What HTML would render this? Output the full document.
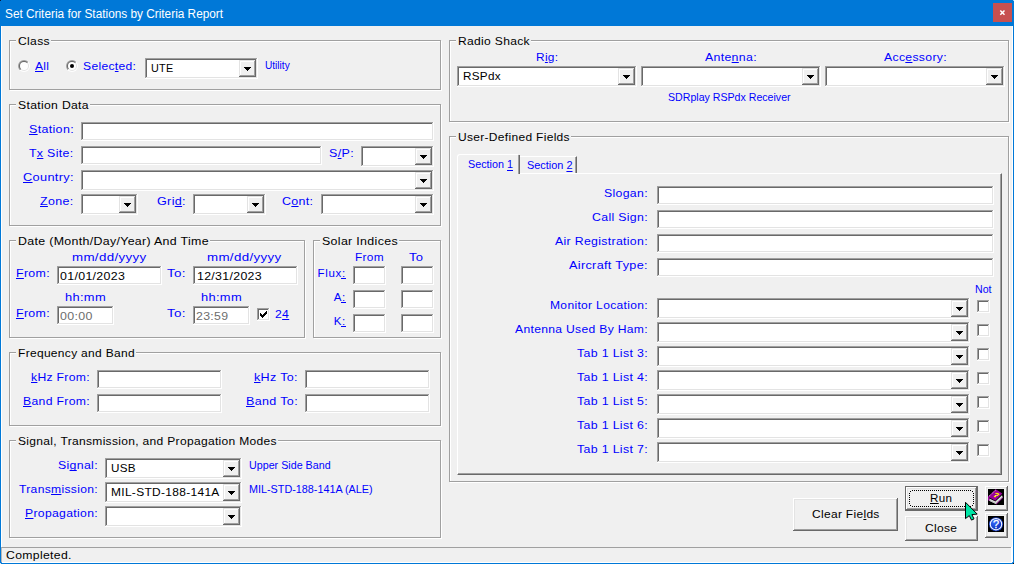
<!DOCTYPE html><html><head><meta charset="utf-8"><title>Set Criteria for Stations by Criteria Report</title><style>
html,body{margin:0;padding:0;}
body{width:1014px;height:564px;overflow:hidden;background:#f0f0f0;position:relative;font-family:"Liberation Sans",sans-serif;}
div,span,svg{position:absolute;box-sizing:border-box;}
.s{white-space:nowrap;line-height:1;}
.s u{position:static;text-decoration:underline;text-underline-offset:0.5px;text-decoration-thickness:1px;text-decoration-skip-ink:none;}
.fv{font-size:11.5px;}
.fa{font-size:11px;}
.ft{font-size:12px;}
.fx{font-size:10px;}
.fa u{text-underline-offset:1.5px;}
.fx{font-weight:bold;}
.gb{border:1px solid #a0a0a0;box-shadow:1px 1px 0 #fff, inset 1px 1px 0 #fff;}
.gap{background:#f0f0f0;height:2px;}
.tb,.ck{background:linear-gradient(#fff,#fff) right top/1px 100% no-repeat,linear-gradient(#fff,#fff) left bottom/100% 1px no-repeat,linear-gradient(#a0a0a0,#a0a0a0) left top/100% 1px no-repeat,linear-gradient(#a0a0a0,#a0a0a0) left top/1px 100% no-repeat,#fff;}
.tb::before,.ck::before,.btn::before,.cbb::before{content:"";position:absolute;left:1px;top:1px;right:1px;bottom:1px;}
.tb::before,.ck::before{background:linear-gradient(#e3e3e3,#e3e3e3) right top/1px 100% no-repeat,linear-gradient(#e3e3e3,#e3e3e3) left bottom/100% 1px no-repeat,linear-gradient(#696969,#696969) left top/100% 1px no-repeat,linear-gradient(#696969,#696969) left top/1px 100% no-repeat;}
.cbb{width:17px;height:17px;background:linear-gradient(#696969,#696969) right top/1px 100% no-repeat,linear-gradient(#696969,#696969) left bottom/100% 1px no-repeat,linear-gradient(#e3e3e3,#e3e3e3) left top/100% 1px no-repeat,linear-gradient(#e3e3e3,#e3e3e3) left top/1px 100% no-repeat,#f0f0f0;}
.cbb::before{background:linear-gradient(#a0a0a0,#a0a0a0) right top/1px 100% no-repeat,linear-gradient(#a0a0a0,#a0a0a0) left bottom/100% 1px no-repeat,linear-gradient(#fff,#fff) left top/100% 1px no-repeat,linear-gradient(#fff,#fff) left top/1px 100% no-repeat;}
.btn{background:linear-gradient(#696969,#696969) right top/1px 100% no-repeat,linear-gradient(#696969,#696969) left bottom/100% 1px no-repeat,linear-gradient(#fff,#fff) left top/100% 1px no-repeat,linear-gradient(#fff,#fff) left top/1px 100% no-repeat,#f0f0f0;}
.btn::before{background:linear-gradient(#a0a0a0,#a0a0a0) right top/1px 100% no-repeat,linear-gradient(#a0a0a0,#a0a0a0) left bottom/100% 1px no-repeat,linear-gradient(#e3e3e3,#e3e3e3) left top/100% 1px no-repeat,linear-gradient(#e3e3e3,#e3e3e3) left top/1px 100% no-repeat;}
.ck{width:13px;height:13px;}
</style></head><body>
<div style="left:0;top:0;width:1014px;height:26px;background:#0078d7"></div>
<div style="left:0;top:26px;width:1px;height:538px;background:#0078d7"></div>
<div style="left:1013px;top:26px;width:1px;height:538px;background:#0078d7"></div>
<div style="left:0;top:563px;width:1014px;height:1px;background:#0078d7"></div>
<div style="left:1px;top:26px;width:1px;height:536px;background:#fff"></div>
<div style="left:1012px;top:26px;width:1px;height:536px;background:#fff"></div>
<div style="left:1px;top:562px;width:1012px;height:1px;background:#fff"></div>
<div style="left:993px;top:3px;width:19px;height:19px;background:#c75050"></div>
<svg style="left:999px;top:9px" width="7" height="7" viewBox="0 0 7 7"><path d="M1.3 1.5 L5.5 5.7 M5.5 1.5 L1.3 5.7" stroke="#fff" stroke-width="1.5" fill="none"/></svg>
<div class="gb" style="left:9px;top:40px;width:432px;height:50px"></div>
<div class="gb" style="left:9px;top:104px;width:432px;height:122px"></div>
<div class="gb" style="left:9px;top:240px;width:296px;height:98px"></div>
<div class="gb" style="left:313px;top:240px;width:128px;height:98px"></div>
<div class="gb" style="left:9px;top:352px;width:432px;height:74px"></div>
<div class="gb" style="left:9px;top:440px;width:432px;height:98px"></div>
<div class="gb" style="left:449px;top:40px;width:560px;height:82px"></div>
<div class="gb" style="left:449px;top:136px;width:560px;height:346px"></div>
<div class="gap" style="left:16px;top:40px;width:35px"></div>
<div class="gap" style="left:16px;top:104px;width:74px"></div>
<div class="gap" style="left:16px;top:240px;width:194px"></div>
<div class="gap" style="left:320px;top:240px;width:79px"></div>
<div class="gap" style="left:16px;top:352px;width:120px"></div>
<div class="gap" style="left:16px;top:440px;width:262px"></div>
<div class="gap" style="left:456px;top:40px;width:75px"></div>
<div class="gap" style="left:456px;top:136px;width:115px"></div>

<div style="left:457px;top:173px;width:545px;height:302px;border-left:1px solid #fff;border-top:1px solid #fff;border-right:1px solid #696969;border-bottom:1px solid #696969;box-shadow:inset -1px -1px 0 #a0a0a0"></div>
<div style="left:457px;top:154px;width:63px;height:20px;background:#f0f0f0;border-left:1px solid #fff;border-top:1px solid #fff;border-right:1px solid #696969;box-shadow:inset -1px 0 0 #a0a0a0;border-top-left-radius:3px"></div>
<div style="left:518px;top:154px;width:2px;height:1px;background:#f0f0f0"></div>
<div style="left:520px;top:156px;width:57px;height:17px;border-top:1px solid #fff;border-right:1px solid #696969;box-shadow:inset -1px 0 0 #a0a0a0"></div>

<div class="tb" style="left:81px;top:122px;width:353px;height:19px"></div>
<div class="tb" style="left:81px;top:146px;width:241px;height:19px"></div>
<div class="tb" style="left:57px;top:266px;width:105px;height:19px"></div>
<div class="tb" style="left:193px;top:266px;width:105px;height:19px"></div>
<div class="tb" style="left:57px;top:306px;width:57px;height:19px"></div>
<div class="tb" style="left:193px;top:306px;width:57px;height:19px"></div>
<div class="tb" style="left:353px;top:266px;width:33px;height:19px"></div>
<div class="tb" style="left:401px;top:266px;width:33px;height:19px"></div>
<div class="tb" style="left:353px;top:290px;width:33px;height:19px"></div>
<div class="tb" style="left:401px;top:290px;width:33px;height:19px"></div>
<div class="tb" style="left:353px;top:314px;width:33px;height:19px"></div>
<div class="tb" style="left:401px;top:314px;width:33px;height:19px"></div>
<div class="tb" style="left:97px;top:370px;width:125px;height:19px"></div>
<div class="tb" style="left:305px;top:370px;width:125px;height:19px"></div>
<div class="tb" style="left:97px;top:394px;width:125px;height:19px"></div>
<div class="tb" style="left:305px;top:394px;width:125px;height:19px"></div>
<div class="tb" style="left:657px;top:186px;width:337px;height:19px"></div>
<div class="tb" style="left:657px;top:210px;width:337px;height:19px"></div>
<div class="tb" style="left:657px;top:234px;width:337px;height:19px"></div>
<div class="tb" style="left:657px;top:258px;width:337px;height:19px"></div>
<div class="tb" style="left:145px;top:58px;width:113px;height:21px"></div>
<div class="cbb" style="left:239px;top:60px"></div>
<svg style="left:244px;top:67px" width="7" height="4" viewBox="0 0 7 4" shape-rendering="crispEdges" fill="#000"><rect width="7" height="1"/><rect x="1" y="1" width="5" height="1"/><rect x="2" y="2" width="3" height="1"/><rect x="3" y="3" width="1" height="1"/></svg>
<div class="tb" style="left:361px;top:146px;width:73px;height:21px"></div>
<div class="cbb" style="left:415px;top:148px"></div>
<svg style="left:420px;top:155px" width="7" height="4" viewBox="0 0 7 4" shape-rendering="crispEdges" fill="#000"><rect width="7" height="1"/><rect x="1" y="1" width="5" height="1"/><rect x="2" y="2" width="3" height="1"/><rect x="3" y="3" width="1" height="1"/></svg>
<div class="tb" style="left:81px;top:170px;width:353px;height:21px"></div>
<div class="cbb" style="left:415px;top:172px"></div>
<svg style="left:420px;top:179px" width="7" height="4" viewBox="0 0 7 4" shape-rendering="crispEdges" fill="#000"><rect width="7" height="1"/><rect x="1" y="1" width="5" height="1"/><rect x="2" y="2" width="3" height="1"/><rect x="3" y="3" width="1" height="1"/></svg>
<div class="tb" style="left:81px;top:194px;width:57px;height:21px"></div>
<div class="cbb" style="left:119px;top:196px"></div>
<svg style="left:124px;top:203px" width="7" height="4" viewBox="0 0 7 4" shape-rendering="crispEdges" fill="#000"><rect width="7" height="1"/><rect x="1" y="1" width="5" height="1"/><rect x="2" y="2" width="3" height="1"/><rect x="3" y="3" width="1" height="1"/></svg>
<div class="tb" style="left:193px;top:194px;width:73px;height:21px"></div>
<div class="cbb" style="left:247px;top:196px"></div>
<svg style="left:252px;top:203px" width="7" height="4" viewBox="0 0 7 4" shape-rendering="crispEdges" fill="#000"><rect width="7" height="1"/><rect x="1" y="1" width="5" height="1"/><rect x="2" y="2" width="3" height="1"/><rect x="3" y="3" width="1" height="1"/></svg>
<div class="tb" style="left:321px;top:194px;width:113px;height:21px"></div>
<div class="cbb" style="left:415px;top:196px"></div>
<svg style="left:420px;top:203px" width="7" height="4" viewBox="0 0 7 4" shape-rendering="crispEdges" fill="#000"><rect width="7" height="1"/><rect x="1" y="1" width="5" height="1"/><rect x="2" y="2" width="3" height="1"/><rect x="3" y="3" width="1" height="1"/></svg>
<div class="tb" style="left:105px;top:458px;width:137px;height:21px"></div>
<div class="cbb" style="left:223px;top:460px"></div>
<svg style="left:228px;top:467px" width="7" height="4" viewBox="0 0 7 4" shape-rendering="crispEdges" fill="#000"><rect width="7" height="1"/><rect x="1" y="1" width="5" height="1"/><rect x="2" y="2" width="3" height="1"/><rect x="3" y="3" width="1" height="1"/></svg>
<div class="tb" style="left:105px;top:482px;width:137px;height:21px"></div>
<div class="cbb" style="left:223px;top:484px"></div>
<svg style="left:228px;top:491px" width="7" height="4" viewBox="0 0 7 4" shape-rendering="crispEdges" fill="#000"><rect width="7" height="1"/><rect x="1" y="1" width="5" height="1"/><rect x="2" y="2" width="3" height="1"/><rect x="3" y="3" width="1" height="1"/></svg>
<div class="tb" style="left:105px;top:506px;width:137px;height:21px"></div>
<div class="cbb" style="left:223px;top:508px"></div>
<svg style="left:228px;top:515px" width="7" height="4" viewBox="0 0 7 4" shape-rendering="crispEdges" fill="#000"><rect width="7" height="1"/><rect x="1" y="1" width="5" height="1"/><rect x="2" y="2" width="3" height="1"/><rect x="3" y="3" width="1" height="1"/></svg>
<div class="tb" style="left:457px;top:66px;width:180px;height:21px"></div>
<div class="cbb" style="left:618px;top:68px"></div>
<svg style="left:623px;top:75px" width="7" height="4" viewBox="0 0 7 4" shape-rendering="crispEdges" fill="#000"><rect width="7" height="1"/><rect x="1" y="1" width="5" height="1"/><rect x="2" y="2" width="3" height="1"/><rect x="3" y="3" width="1" height="1"/></svg>
<div class="tb" style="left:641px;top:66px;width:180px;height:21px"></div>
<div class="cbb" style="left:802px;top:68px"></div>
<svg style="left:807px;top:75px" width="7" height="4" viewBox="0 0 7 4" shape-rendering="crispEdges" fill="#000"><rect width="7" height="1"/><rect x="1" y="1" width="5" height="1"/><rect x="2" y="2" width="3" height="1"/><rect x="3" y="3" width="1" height="1"/></svg>
<div class="tb" style="left:825px;top:66px;width:180px;height:21px"></div>
<div class="cbb" style="left:986px;top:68px"></div>
<svg style="left:991px;top:75px" width="7" height="4" viewBox="0 0 7 4" shape-rendering="crispEdges" fill="#000"><rect width="7" height="1"/><rect x="1" y="1" width="5" height="1"/><rect x="2" y="2" width="3" height="1"/><rect x="3" y="3" width="1" height="1"/></svg>
<div class="tb" style="left:657px;top:298px;width:313px;height:21px"></div>
<div class="cbb" style="left:951px;top:300px"></div>
<svg style="left:956px;top:307px" width="7" height="4" viewBox="0 0 7 4" shape-rendering="crispEdges" fill="#000"><rect width="7" height="1"/><rect x="1" y="1" width="5" height="1"/><rect x="2" y="2" width="3" height="1"/><rect x="3" y="3" width="1" height="1"/></svg>
<div class="tb" style="left:657px;top:322px;width:313px;height:21px"></div>
<div class="cbb" style="left:951px;top:324px"></div>
<svg style="left:956px;top:331px" width="7" height="4" viewBox="0 0 7 4" shape-rendering="crispEdges" fill="#000"><rect width="7" height="1"/><rect x="1" y="1" width="5" height="1"/><rect x="2" y="2" width="3" height="1"/><rect x="3" y="3" width="1" height="1"/></svg>
<div class="tb" style="left:657px;top:346px;width:313px;height:21px"></div>
<div class="cbb" style="left:951px;top:348px"></div>
<svg style="left:956px;top:355px" width="7" height="4" viewBox="0 0 7 4" shape-rendering="crispEdges" fill="#000"><rect width="7" height="1"/><rect x="1" y="1" width="5" height="1"/><rect x="2" y="2" width="3" height="1"/><rect x="3" y="3" width="1" height="1"/></svg>
<div class="tb" style="left:657px;top:370px;width:313px;height:21px"></div>
<div class="cbb" style="left:951px;top:372px"></div>
<svg style="left:956px;top:379px" width="7" height="4" viewBox="0 0 7 4" shape-rendering="crispEdges" fill="#000"><rect width="7" height="1"/><rect x="1" y="1" width="5" height="1"/><rect x="2" y="2" width="3" height="1"/><rect x="3" y="3" width="1" height="1"/></svg>
<div class="tb" style="left:657px;top:394px;width:313px;height:21px"></div>
<div class="cbb" style="left:951px;top:396px"></div>
<svg style="left:956px;top:403px" width="7" height="4" viewBox="0 0 7 4" shape-rendering="crispEdges" fill="#000"><rect width="7" height="1"/><rect x="1" y="1" width="5" height="1"/><rect x="2" y="2" width="3" height="1"/><rect x="3" y="3" width="1" height="1"/></svg>
<div class="tb" style="left:657px;top:418px;width:313px;height:21px"></div>
<div class="cbb" style="left:951px;top:420px"></div>
<svg style="left:956px;top:427px" width="7" height="4" viewBox="0 0 7 4" shape-rendering="crispEdges" fill="#000"><rect width="7" height="1"/><rect x="1" y="1" width="5" height="1"/><rect x="2" y="2" width="3" height="1"/><rect x="3" y="3" width="1" height="1"/></svg>
<div class="tb" style="left:657px;top:442px;width:313px;height:21px"></div>
<div class="cbb" style="left:951px;top:444px"></div>
<svg style="left:956px;top:451px" width="7" height="4" viewBox="0 0 7 4" shape-rendering="crispEdges" fill="#000"><rect width="7" height="1"/><rect x="1" y="1" width="5" height="1"/><rect x="2" y="2" width="3" height="1"/><rect x="3" y="3" width="1" height="1"/></svg>
<div class="ck" style="left:977px;top:300px"></div>
<div class="ck" style="left:977px;top:324px"></div>
<div class="ck" style="left:977px;top:348px"></div>
<div class="ck" style="left:977px;top:372px"></div>
<div class="ck" style="left:977px;top:396px"></div>
<div class="ck" style="left:977px;top:420px"></div>
<div class="ck" style="left:977px;top:444px"></div>

<!-- radios -->
<svg width="0" height="0" style="left:0;top:0"><defs>
<linearGradient id="ro" x1="0" y1="0" x2="1" y2="1"><stop offset="0.5" stop-color="#a0a0a0"/><stop offset="0.5" stop-color="#ffffff"/></linearGradient>
<linearGradient id="ri" x1="0" y1="0" x2="1" y2="1"><stop offset="0.5" stop-color="#696969"/><stop offset="0.5" stop-color="#e3e3e3"/></linearGradient>
</defs></svg>
<svg style="left:18px;top:60px" width="12" height="12" viewBox="0 0 12 12"><circle cx="6" cy="6" r="6" fill="url(#ro)"/><circle cx="6" cy="6" r="5" fill="url(#ri)"/><circle cx="6" cy="6" r="4" fill="#fff"/></svg>
<svg style="left:66px;top:60px" width="12" height="12" viewBox="0 0 12 12"><circle cx="6" cy="6" r="6" fill="url(#ro)"/><circle cx="6" cy="6" r="5" fill="url(#ri)"/><circle cx="6" cy="6" r="4" fill="#fff"/><circle cx="6" cy="6" r="2" fill="#000"/></svg>
<div style="left:341px;top:278px;width:5px;height:1px;background:#00f"></div>
<div style="left:341px;top:302px;width:5px;height:1px;background:#00f"></div>
<div style="left:341px;top:326px;width:5px;height:1px;background:#00f"></div>
<!-- 24 checkbox -->
<div class="ck" style="left:257px;top:308px"></div>
<svg style="left:260px;top:311px" width="7" height="7" viewBox="0 0 7 7" shape-rendering="crispEdges" fill="#000"><rect x="0" y="2" width="1" height="3"/><rect x="1" y="3" width="1" height="3"/><rect x="2" y="4" width="1" height="3"/><rect x="3" y="3" width="1" height="3"/><rect x="4" y="2" width="1" height="3"/><rect x="5" y="1" width="1" height="3"/><rect x="6" y="0" width="1" height="3"/></svg>
<!-- buttons -->
<div class="btn" style="left:793px;top:498px;width:105px;height:33px"></div>
<div style="left:905px;top:486px;width:73px;height:25px;background:#696969"></div>
<div class="btn" style="left:906px;top:487px;width:71px;height:23px"></div>
<svg style="left:909px;top:490px" width="65" height="17" viewBox="0 0 65 17" shape-rendering="crispEdges"><path d="M2.5 0.5H63 M2.5 16.5H63 M0.5 2.5V15 M64.5 2.5V15" stroke="#000" stroke-width="1" stroke-dasharray="1 1" fill="none"/><rect x="1" y="1" width="1" height="1"/><rect x="63" y="1" width="1" height="1"/><rect x="1" y="15" width="1" height="1"/><rect x="63" y="15" width="1" height="1"/></svg>
<div class="btn" style="left:905px;top:516px;width:73px;height:25px"></div>
<div class="btn" style="left:985px;top:486px;width:23px;height:25px"></div>
<div class="btn" style="left:985px;top:513px;width:23px;height:25px"></div>
<svg style="left:988px;top:489px" width="16" height="16" viewBox="0 0 16 16"><rect width="16" height="16" fill="#000"/>
<polygon points="1.3,9.4 7.4,12.4 14,6.2 14.7,8.4 8,15.1 1.3,11.7" fill="#e6e6e6"/>
<polygon points="1.3,10.6 7.6,13.8 14.4,7.4 14.7,8.4 8,15.1 1.3,11.7" fill="#c0c0c0"/>
<polygon points="7.7,0.2 14.3,4.5 7.3,11.8 0,7.8" fill="#990099"/>
<polygon points="0,7.6 1.3,8.3 1.3,11.7 0,11.2" fill="#a000a0"/>
<path d="M8.2 15.2 L14.9 8.5" stroke="#a000a0" stroke-width="0.9" fill="none"/>
<path d="M1 7.3 L7.6 1.2" stroke="#e8c8e8" stroke-width="0.9" stroke-dasharray="1.1 0.9" fill="none"/>
<g fill="#ffee00"><rect x="7.4" y="3.9" width="3.2" height="1.1"/><rect x="9.6" y="4.8" width="1.7" height="1.2"/><rect x="7.7" y="5.9" width="2.5" height="1.1"/><rect x="5.9" y="6.9" width="2.2" height="1.3"/></g><rect x="6.9" y="6" width="0.9" height="0.9" fill="#f4f4d0"/>
</svg>
<svg style="left:988px;top:516px" width="16" height="16" viewBox="0 0 16 16"><defs><radialGradient id="hg" cx="0.35" cy="0.3" r="0.8"><stop offset="0" stop-color="#3a6cff"/><stop offset="1" stop-color="#0024b0"/></radialGradient></defs><rect width="16" height="16" fill="#000"/>
<circle cx="8" cy="8.2" r="7" fill="#1b3fc0"/><circle cx="8" cy="8.2" r="5.7" fill="url(#hg)" stroke="#f0f4ff" stroke-width="1.1"/>
<text x="8.1" y="12.3" text-anchor="middle" font-family="Liberation Sans, sans-serif" font-size="11" fill="#fff" stroke="#fff" stroke-width="0.3">?</text>
</svg>
<svg style="left:960px;top:498px" width="24" height="26" viewBox="960 498 24 26"><polygon points="965.5,502.3 965.5,518.6 969.3,515.6 971.5,520.1 974,518.9 971.9,514.6 977.2,514.1" fill="#00e6a6" stroke="#000" stroke-width="1" stroke-linejoin="miter"/></svg>
<!-- status bar -->
<div style="left:1px;top:547px;width:1010px;height:15px;border-top:1px solid #a0a0a0;border-left:1px solid #b8b8b8;"></div>
<div style="left:1011px;top:547px;width:1px;height:16px;background:#fff"></div>
<div style="left:1012px;top:562px;width:1px;height:1px;background:#3a8fe0"></div>
<div style="left:1013px;top:563px;width:1px;height:1px;background:#101010"></div>
<div style="left:1px;top:562px;width:1px;height:1px;background:#3a8fe0"></div>
<div style="left:0px;top:563px;width:1px;height:1px;background:#d0e4f7"></div>
<div style="left:0px;top:0px;width:1px;height:1px;background:#0a1a3a"></div>
<div style="left:1013px;top:0px;width:1px;height:1px;background:#a8d0f4"></div>

<span id="t0" class="s fv" style="transform-origin:left top;left:17.7px;top:35.6px;color:#000000;letter-spacing:0.300px;transform:scaleX(1.0545)">Class</span>
<span id="t1" class="s fv" style="transform-origin:left top;left:17.7px;top:99.6px;color:#000000;letter-spacing:0.300px;transform:scaleX(1.0601)">Station Data</span>
<span id="t2" class="s fv" style="transform-origin:left top;left:17.7px;top:235.6px;color:#000000;letter-spacing:0.300px;transform:scaleX(1.0767)">Date (Month/Day/Year) And Time</span>
<span id="t3" class="s fv" style="transform-origin:left top;left:321.7px;top:235.6px;color:#000000;letter-spacing:0.300px;transform:scaleX(1.0787)">Solar Indices</span>
<span id="t4" class="s fv" style="transform-origin:left top;left:17.7px;top:347.6px;color:#000000;letter-spacing:0.300px;transform:scaleX(1.0422)">Frequency and Band</span>
<span id="t5" class="s fv" style="transform-origin:left top;left:17.7px;top:435.6px;color:#000000;letter-spacing:0.300px;transform:scaleX(1.0461)">Signal, Transmission, and Propagation Modes</span>
<span id="t6" class="s fv" style="transform-origin:left top;left:457.7px;top:35.6px;color:#000000;letter-spacing:0.300px;transform:scaleX(1.0496)">Radio Shack</span>
<span id="t7" class="s fv" style="transform-origin:left top;left:457.7px;top:131.6px;color:#000000;letter-spacing:0.300px;transform:scaleX(1.0427)">User-Defined Fields</span>
<span id="t8" class="s fv" style="transform-origin:left top;left:34.7px;top:60.6px;color:#0000ff;letter-spacing:0.300px;transform:scaleX(1.0450)"><u>A</u>ll</span>
<span id="t9" class="s fv" style="transform-origin:left top;left:83.3px;top:60.6px;color:#0000ff;letter-spacing:0.300px;transform:scaleX(1.0519)">Selec<u>t</u>ed:</span>
<span id="t10" class="s fa" style="transform-origin:left top;left:265.1px;top:60px;color:#0000ff;letter-spacing:0.000px;transform:scaleX(0.9185)">Utility</span>
<span id="t11" class="s fv" style="transform-origin:left top;left:151.1px;top:62.6px;color:#000000;letter-spacing:0.300px;transform:scaleX(0.9407)">UTE</span>
<span id="t12" class="s fv" style="transform-origin:left top;left:28.7px;top:123.6px;color:#0000ff;letter-spacing:0.300px;transform:scaleX(1.0852)"><u>S</u>tation:</span>
<span id="t13" class="s fv" style="transform-origin:left top;left:29.2px;top:147.6px;color:#0000ff;letter-spacing:0.300px;transform:scaleX(1.0730)">T<u>x</u> Site:</span>
<span id="t14" class="s fv" style="transform-origin:left top;left:22.7px;top:171.6px;color:#0000ff;letter-spacing:0.300px;transform:scaleX(1.1100)"><u>C</u>ountry:</span>
<span id="t15" class="s fv" style="transform-origin:left top;left:40.2px;top:195.6px;color:#0000ff;letter-spacing:0.300px;transform:scaleX(1.0809)"><u>Z</u>one:</span>
<span id="t16" class="s fv" style="transform-origin:left top;left:156.7px;top:195.6px;color:#0000ff;letter-spacing:0.300px;transform:scaleX(1.0936)">Gri<u>d</u>:</span>
<span id="t17" class="s fv" style="transform-origin:left top;left:328.7px;top:147.6px;color:#0000ff;letter-spacing:0.300px;transform:scaleX(1.0861)">S<u>/</u>P:</span>
<span id="t18" class="s fv" style="transform-origin:left top;left:282.2px;top:195.6px;color:#0000ff;letter-spacing:0.300px;transform:scaleX(1.0830)">C<u>o</u>nt:</span>
<span id="t19" class="s fv" style="transform-origin:left top;left:71.7px;top:251.6px;color:#0000ff;letter-spacing:0.300px;transform:scaleX(1.1570)">mm/dd/yyyy</span>
<span id="t20" class="s fv" style="transform-origin:left top;left:207.2px;top:251.6px;color:#0000ff;letter-spacing:0.300px;transform:scaleX(1.1570)">mm/dd/yyyy</span>
<span id="t21" class="s fv" style="transform-origin:left top;left:15.7px;top:267.6px;color:#0000ff;letter-spacing:0.300px;transform:scaleX(1.0758)"><u>F</u>rom:</span>
<span id="t22" class="s fv" style="transform-origin:left top;left:166.7px;top:267.6px;color:#0000ff;letter-spacing:0.300px;transform:scaleX(1.1666)">To:</span>
<span id="t23" class="s fv" style="transform-origin:left top;left:65.2px;top:291.6px;color:#0000ff;letter-spacing:0.300px;transform:scaleX(1.1167)">hh:mm</span>
<span id="t24" class="s fv" style="transform-origin:left top;left:200.7px;top:291.6px;color:#0000ff;letter-spacing:0.300px;transform:scaleX(1.1167)">hh:mm</span>
<span id="t25" class="s fv" style="transform-origin:left top;left:15.7px;top:307.6px;color:#0000ff;letter-spacing:0.300px;transform:scaleX(1.0758)"><u>F</u>rom:</span>
<span id="t26" class="s fv" style="transform-origin:left top;left:166.7px;top:307.6px;color:#0000ff;letter-spacing:0.300px;transform:scaleX(1.1666)">To:</span>
<span id="t27" class="s fv" style="transform-origin:left top;left:275.4px;top:308.6px;color:#0000ff;letter-spacing:0.300px;transform:scaleX(1.0601)">2<u>4</u></span>
<span id="t28" class="s fv" style="transform-origin:left top;left:60.45px;top:270.6px;color:#000000;letter-spacing:0.300px;transform:scaleX(1.0761)">01/01/2023</span>
<span id="t29" class="s fv" style="transform-origin:left top;left:196.7px;top:270.6px;color:#000000;letter-spacing:0.300px;transform:scaleX(1.0720)">12/31/2023</span>
<span id="t30" class="s fv" style="transform-origin:left top;left:60.45px;top:310.6px;color:#6d6d6d;letter-spacing:0.300px;transform:scaleX(1.0790)">00:00</span>
<span id="t31" class="s fv" style="transform-origin:left top;left:196.2px;top:310.6px;color:#6d6d6d;letter-spacing:0.300px;transform:scaleX(1.0707)">23:59</span>
<span id="t32" class="s fv" style="transform-origin:left top;left:354.7px;top:251.6px;color:#0000ff;letter-spacing:0.300px;transform:scaleX(1.0309)">From</span>
<span id="t33" class="s fv" style="transform-origin:left top;left:409.2px;top:251.6px;color:#0000ff;letter-spacing:0.300px;transform:scaleX(1.1320)">To</span>
<span id="t34" class="s fv" style="transform-origin:right top;right:667.95px;top:267.6px;color:#0000ff;letter-spacing:0.750px;transform:scaleX(1.0000)">Flux:</span>
<span id="t35" class="s fv" style="transform-origin:right top;right:667.95px;top:291.6px;color:#0000ff;letter-spacing:0.750px;transform:scaleX(1.0000)">A:</span>
<span id="t36" class="s fv" style="transform-origin:right top;right:667.95px;top:315.6px;color:#0000ff;letter-spacing:0.750px;transform:scaleX(1.0000)">K:</span>
<span id="t37" class="s fv" style="transform-origin:left top;left:30.7px;top:371.6px;color:#0000ff;letter-spacing:0.300px;transform:scaleX(1.0572)"><u>k</u>Hz From:</span>
<span id="t38" class="s fv" style="transform-origin:left top;left:22.7px;top:395.6px;color:#0000ff;letter-spacing:0.300px;transform:scaleX(1.0606)"><u>B</u>and From:</span>
<span id="t39" class="s fv" style="transform-origin:left top;left:253.7px;top:371.6px;color:#0000ff;letter-spacing:0.300px;transform:scaleX(1.0916)"><u>k</u>Hz To:</span>
<span id="t40" class="s fv" style="transform-origin:left top;left:245.7px;top:395.6px;color:#0000ff;letter-spacing:0.300px;transform:scaleX(1.0912)"><u>B</u>and To:</span>
<span id="t41" class="s fv" style="transform-origin:left top;left:57.7px;top:459.6px;color:#0000ff;letter-spacing:0.300px;transform:scaleX(1.0706)">Si<u>g</u>nal:</span>
<span id="t42" class="s fv" style="transform-origin:left top;left:18.7px;top:483.6px;color:#0000ff;letter-spacing:0.300px;transform:scaleX(1.0510)">Trans<u>m</u>ission:</span>
<span id="t43" class="s fv" style="transform-origin:left top;left:24.7px;top:507.6px;color:#0000ff;letter-spacing:0.300px;transform:scaleX(1.0596)"><u>P</u>ropagation:</span>
<span id="t44" class="s fa" style="transform-origin:left top;left:248.7px;top:460px;color:#0000ff;letter-spacing:0.000px;transform:scaleX(0.9740)">Upper Side Band</span>
<span id="t45" class="s fa" style="transform-origin:left top;left:248.7px;top:484px;color:#0000ff;letter-spacing:0.000px;transform:scaleX(0.9814)">MIL-STD-188-141A (ALE)</span>
<span id="t46" class="s fv" style="transform-origin:left top;left:110.7px;top:462.6px;color:#000000;letter-spacing:0.300px;transform:scaleX(1.0142)">USB</span>
<span id="t47" class="s fv" style="transform-origin:left top;left:110.7px;top:486.6px;color:#000000;letter-spacing:0.300px;transform:scaleX(1.0396)">MIL-STD-188-141A</span>
<span id="t48" class="s fv" style="transform-origin:left top;left:536.2px;top:51.6px;color:#0000ff;letter-spacing:0.300px;transform:scaleX(1.0342)">R<u>i</u>g:</span>
<span id="t49" class="s fv" style="transform-origin:left top;left:704.7px;top:51.6px;color:#0000ff;letter-spacing:0.300px;transform:scaleX(1.0710)">Ante<u>n</u>na:</span>
<span id="t50" class="s fv" style="transform-origin:left top;left:883.7px;top:51.6px;color:#0000ff;letter-spacing:0.300px;transform:scaleX(1.0619)">Acc<u>e</u>ssory:</span>
<span id="t51" class="s fa" style="transform-origin:left top;left:667.7px;top:92px;color:#0000ff;letter-spacing:0.000px;transform:scaleX(0.9642)">SDRplay RSPdx Receiver</span>
<span id="t52" class="s fv" style="transform-origin:left top;left:462.7px;top:70.6px;color:#000000;letter-spacing:0.300px;transform:scaleX(1.0163)">RSPdx</span>
<span id="t53" class="s fa" style="transform-origin:left top;left:468.1px;top:159px;color:#0000ff;letter-spacing:0.000px;transform:scaleX(0.9809)">Section <u>1</u></span>
<span id="t54" class="s fa" style="transform-origin:left top;left:527px;top:160px;color:#0000ff;letter-spacing:0.000px;transform:scaleX(0.9918)">Section <u>2</u></span>
<span id="t55" class="s fv" style="transform-origin:left top;left:603.7px;top:187.6px;color:#0000ff;letter-spacing:0.300px;transform:scaleX(1.0682)">Slogan:</span>
<span id="t56" class="s fv" style="transform-origin:left top;left:591.7px;top:211.6px;color:#0000ff;letter-spacing:0.300px;transform:scaleX(1.0709)">Call Sign:</span>
<span id="t57" class="s fv" style="transform-origin:left top;left:554.7px;top:235.6px;color:#0000ff;letter-spacing:0.300px;transform:scaleX(1.0691)">Air Registration:</span>
<span id="t58" class="s fv" style="transform-origin:left top;left:568.7px;top:259.6px;color:#0000ff;letter-spacing:0.300px;transform:scaleX(1.1001)">Aircraft Type:</span>
<span id="t59" class="s fv" style="transform-origin:left top;left:549.7px;top:299.6px;color:#0000ff;letter-spacing:0.300px;transform:scaleX(1.0493)">Monitor Location:</span>
<span id="t60" class="s fv" style="transform-origin:left top;left:514.7px;top:323.6px;color:#0000ff;letter-spacing:0.300px;transform:scaleX(1.0535)">Antenna Used By Ham:</span>
<span id="t61" class="s fv" style="transform-origin:left top;left:576.7px;top:347.6px;color:#0000ff;letter-spacing:0.300px;transform:scaleX(1.0760)">Tab 1 List 3:</span>
<span id="t62" class="s fv" style="transform-origin:left top;left:576.7px;top:371.6px;color:#0000ff;letter-spacing:0.300px;transform:scaleX(1.0760)">Tab 1 List 4:</span>
<span id="t63" class="s fv" style="transform-origin:left top;left:576.7px;top:395.6px;color:#0000ff;letter-spacing:0.300px;transform:scaleX(1.0760)">Tab 1 List 5:</span>
<span id="t64" class="s fv" style="transform-origin:left top;left:576.7px;top:419.6px;color:#0000ff;letter-spacing:0.300px;transform:scaleX(1.0760)">Tab 1 List 6:</span>
<span id="t65" class="s fv" style="transform-origin:left top;left:576.7px;top:443.6px;color:#0000ff;letter-spacing:0.300px;transform:scaleX(1.0760)">Tab 1 List 7:</span>
<span id="t66" class="s fa" style="transform-origin:left top;left:975.2px;top:284px;color:#0000ff;letter-spacing:0.000px;transform:scaleX(0.9635)">Not</span>
<span id="t67" class="s fv" style="transform-origin:left top;left:811.7px;top:508.6px;color:#000000;letter-spacing:0.300px;transform:scaleX(1.0414)">Clear Fie<u>l</u>ds</span>
<span id="t68" class="s fv" style="transform-origin:left top;left:930.1px;top:492.6px;color:#000000;letter-spacing:0.300px;transform:scaleX(1.0088)"><u>R</u>un</span>
<span id="t69" class="s fv" style="transform-origin:left top;left:925.3px;top:522.6px;color:#000000;letter-spacing:0.300px;transform:scaleX(1.0455)">Close</span>
<span id="t70" class="s fv" style="transform-origin:left top;left:6.3px;top:549.6px;color:#000000;letter-spacing:0.300px;transform:scaleX(1.0632)">Completed.</span>
<span id="t71" class="s ft" style="transform-origin:left top;left:4.7px;top:8.1px;color:#ffffff;letter-spacing:0.000px;transform:scaleX(0.9850)">Set Criteria for Stations by Criteria Report</span>
</body></html>
